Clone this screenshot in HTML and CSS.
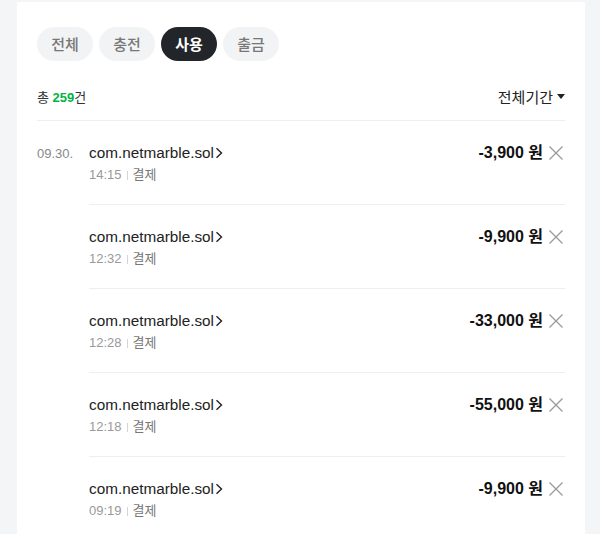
FILE: index.html
```html
<!DOCTYPE html>
<html lang="ko">
<head>
<meta charset="utf-8">
<link rel="stylesheet" href="styles.css">
</head>
<body>
<div class="page">
  <section class="card">
    <nav class="tabs">
      <button class="tab">전체</button>
      <button class="tab">충전</button>
      <button class="tab active">사용</button>
      <button class="tab">출금</button>
    </nav>
    <div class="summary">
      <div class="count">총 <b>259</b>건</div>
      <div class="period">전체기간 <span class="caret"></span></div>
    </div>
    <div class="group">
      <div class="date">09.30.</div>
      <ul class="items">
        <li class="item">
          <div class="info">
            <div class="title">com.netmarble.sol<svg class="chev" viewBox="0 0 8 12" width="8" height="12"><path d="M1.5 1.2l5 4.8-5 4.8" fill="none" stroke="#222" stroke-width="1.4"/></svg></div>
            <div class="sub"><span class="time">14:15</span><span class="bar"></span><span class="kind">결제</span></div>
          </div>
          <div class="amount">-3,900 원</div>
          <svg class="close" viewBox="0 0 16 16" width="16" height="16"><path d="M1.5 1.5l13 13M14.5 1.5l-13 13" stroke="#999" stroke-width="1.3"/></svg>
        </li>
        <li class="item">
          <div class="info">
            <div class="title">com.netmarble.sol<svg class="chev" viewBox="0 0 8 12" width="8" height="12"><path d="M1.5 1.2l5 4.8-5 4.8" fill="none" stroke="#222" stroke-width="1.4"/></svg></div>
            <div class="sub"><span class="time">12:32</span><span class="bar"></span><span class="kind">결제</span></div>
          </div>
          <div class="amount">-9,900 원</div>
          <svg class="close" viewBox="0 0 16 16" width="16" height="16"><path d="M1.5 1.5l13 13M14.5 1.5l-13 13" stroke="#999" stroke-width="1.3"/></svg>
        </li>
        <li class="item">
          <div class="info">
            <div class="title">com.netmarble.sol<svg class="chev" viewBox="0 0 8 12" width="8" height="12"><path d="M1.5 1.2l5 4.8-5 4.8" fill="none" stroke="#222" stroke-width="1.4"/></svg></div>
            <div class="sub"><span class="time">12:28</span><span class="bar"></span><span class="kind">결제</span></div>
          </div>
          <div class="amount">-33,000 원</div>
          <svg class="close" viewBox="0 0 16 16" width="16" height="16"><path d="M1.5 1.5l13 13M14.5 1.5l-13 13" stroke="#999" stroke-width="1.3"/></svg>
        </li>
        <li class="item">
          <div class="info">
            <div class="title">com.netmarble.sol<svg class="chev" viewBox="0 0 8 12" width="8" height="12"><path d="M1.5 1.2l5 4.8-5 4.8" fill="none" stroke="#222" stroke-width="1.4"/></svg></div>
            <div class="sub"><span class="time">12:18</span><span class="bar"></span><span class="kind">결제</span></div>
          </div>
          <div class="amount">-55,000 원</div>
          <svg class="close" viewBox="0 0 16 16" width="16" height="16"><path d="M1.5 1.5l13 13M14.5 1.5l-13 13" stroke="#999" stroke-width="1.3"/></svg>
        </li>
        <li class="item">
          <div class="info">
            <div class="title">com.netmarble.sol<svg class="chev" viewBox="0 0 8 12" width="8" height="12"><path d="M1.5 1.2l5 4.8-5 4.8" fill="none" stroke="#222" stroke-width="1.4"/></svg></div>
            <div class="sub"><span class="time">09:19</span><span class="bar"></span><span class="kind">결제</span></div>
          </div>
          <div class="amount">-9,900 원</div>
          <svg class="close" viewBox="0 0 16 16" width="16" height="16"><path d="M1.5 1.5l13 13M14.5 1.5l-13 13" stroke="#999" stroke-width="1.3"/></svg>
        </li>
      </ul>
    </div>
  </section>
</div>
</body>
</html>
```

FILE: styles.css
```css
* { box-sizing: border-box; }
html, body {
  margin: 0;
  padding: 0;
  background: #f4f5f7;
  font-family: "Liberation Sans", "Noto Sans CJK KR", Arial, sans-serif;
  color: #222;
}
.page {
  padding: 2px 15px 0 17px;
  height: 534px;
  overflow: hidden;
}
.card {
  background: #fff;
  padding: 25px 20px 0;
  min-height: 600px;
}
.tabs {
  display: flex;
  gap: 6px;
}
.tab {
  border: 0;
  margin: 0;
  height: 34px;
  width: 56px;
  padding: 0;
  border-radius: 17px;
  background: #f2f3f5;
  color: #777;
  font-family: "Noto Sans CJK KR", sans-serif;
  font-size: 15px;
  font-weight: 500;
  line-height: 34px;
}
.tab.active {
  background: #222529;
  color: #fff;
  font-weight: 700;
}
.summary {
  margin-top: 25px;
  display: flex;
  justify-content: space-between;
  align-items: center;
  height: 20px;
  box-sizing: content-box;
  padding-bottom: 14px;
  border-bottom: 1px solid #eeeeee;
}
.count {
  font-size: 13px;
  color: #333;
}
.count b {
  color: #00b343;
  font-weight: 700;
}
.period {
  font-size: 15px;
  color: #222;
  display: flex;
  align-items: center;
  gap: 4px;
}
.caret {
  width: 0;
  height: 0;
  border-left: 4px solid transparent;
  border-right: 4px solid transparent;
  border-top: 5px solid #222;
}
.group {
  display: flex;
}
.date {
  width: 52px;
  flex: none;
  font-size: 13px;
  color: #888;
  padding-top: 24px;
  line-height: 18px;
}
.items {
  list-style: none;
  margin: 0;
  padding: 0;
  flex: 1;
}
.item {
  display: flex;
  align-items: flex-start;
  padding: 22px 0 20px;
}
.item + .item {
  border-top: 1px solid #eeeeee;
}
.info {
  flex: 1;
}
.title {
  font-size: 15.3px;
  line-height: 20px;
  color: #222;
  display: flex;
  align-items: center;
}
.chev {
  margin-left: 1px;
}
.sub {
  margin-top: 3px;
  font-size: 13px;
  line-height: 18px;
  display: flex;
  align-items: center;
}
.time { color: #999; }
.kind { color: #777; }
.bar {
  width: 1px;
  height: 9px;
  background: #d5d5d5;
  margin: 0 5px;
}
.amount {
  font-size: 16px;
  line-height: 20px;
  font-weight: 700;
  color: #111;
}
.close {
  margin: 2px 1px 0 5px;
  flex: none;
}
```
